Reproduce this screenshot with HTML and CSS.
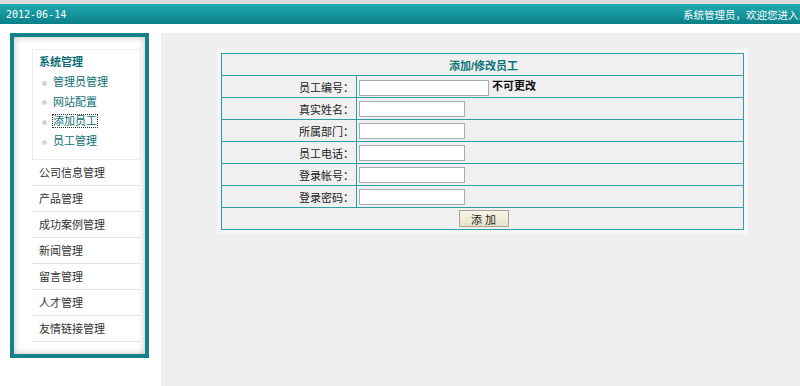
FILE: index.html
```html
<!DOCTYPE html>
<html lang="zh">
<head>
  <meta charset="utf-8">
  <title>后台管理</title>
  <link rel="stylesheet" href="styles.css">
</head>
<body>

  <div class="top">
    <span class="date">2012-06-14</span>
    <span class="welcome">系统管理员，欢迎您进入系统后台管理</span>
  </div>

  <div class="wrap">
    <div class="side">
      <div class="side-inner">
        <div class="sub">
          <h4>系统管理</h4>
          <ul>
            <li><a href="#">管理员管理</a></li>
            <li><a href="#">网站配置</a></li>
            <li><a href="#" class="focus">添加员工</a></li>
            <li><a href="#">员工管理</a></li>
          </ul>
        </div>
        <ul class="menu">
          <li>公司信息管理</li>
          <li>产品管理</li>
          <li>成功案例管理</li>
          <li>新闻管理</li>
          <li>留言管理</li>
          <li>人才管理</li>
          <li>友情链接管理</li>
        </ul>
      </div>
    </div>

    <div class="main">
      <table class="form">
        <tr><th colspan="2">添加/修改员工</th></tr>
        <tr><td class="lbl">员工编号：</td><td><input class="wide" type="text"> <b>不可更改</b></td></tr>
        <tr><td class="lbl">真实姓名：</td><td><input type="text"></td></tr>
        <tr><td class="lbl">所属部门：</td><td><input type="text"></td></tr>
        <tr><td class="lbl">员工电话：</td><td><input type="text"></td></tr>
        <tr><td class="lbl">登录帐号：</td><td><input type="text"></td></tr>
        <tr><td class="lbl">登录密码：</td><td><input type="text"></td></tr>
        <tr><td colspan="2" class="btns"><button>添 加</button></td></tr>
      </table>
    </div>
  </div>

</body>
</html>
```

FILE: styles.css
```css
body {
  margin: 0;
  background: #fff;
  font-family: "Liberation Sans", "Noto Sans CJK SC", sans-serif;
  font-size: 11px;
  color: #222;
}
ul {
  list-style: none;
  margin: 0;
  padding: 0;
}
.top {
  border-top: 4px solid #dcdcdc;
  height: 20px;
  background: linear-gradient(#22abb3, #0b8088);
  color: #fff;
  display: grid;
  grid-template-columns: 683px 117px;
  align-items: center;
  white-space: nowrap;
  overflow: hidden;
}
.date {
  padding-left: 6px;
  font-family: "DejaVu Sans Mono", monospace;
  font-size: 10px;
}
.welcome {
  overflow: hidden;
  font-size: 10.5px;
}
.wrap {
  display: flex;
  padding-top: 9px;
}
.side {
  margin-left: 10px;
  width: 139px;
  height: 325px;
  box-sizing: border-box;
  border: 4px solid #138388;
  background: #fff;
  box-shadow: inset 0 0 7px rgba(0, 0, 0, 0.25);
}
.side-inner {
  margin: 12px 4px 0 18px;
}
.sub {
  border: 1px solid #ececec;
  padding: 5px 0 7px 6px;
}
.sub h4 {
  margin: 0 0 4px;
  font-size: 11px;
  color: #0b6d72;
  line-height: 14px;
}
.sub li {
  line-height: 19.7px;
  padding-left: 3px;
}
.sub li::before {
  content: "";
  display: inline-block;
  width: 5px;
  height: 5px;
  border-radius: 50%;
  background: #d6d6d6;
  margin-right: 6px;
  vertical-align: middle;
}
.sub a {
  color: #0e6f75;
  text-decoration: none;
}
.sub a.focus {
  outline: 1px dotted #333;
}
.menu li {
  height: 25px;
  line-height: 26px;
  padding-left: 7px;
  border-bottom: 1px solid #e3e3e3;
  color: #333;
}
.main {
  margin-left: 12px;
  flex: 1;
  height: 353px;
  box-sizing: border-box;
  background: #efefef;
  padding: 20px 0 0 60px;
}
.form {
  width: 523px;
  border-collapse: collapse;
  border: 1px solid #1f9299;
  background: #f0f0f0;
  box-shadow: 0 0 0 4px #f6f6f6;
}
.form th, .form td {
  border: 1px solid #2f9fa6;
  height: 21px;
  padding: 0 0 0 2px;
}
.form th {
  color: #0b7479;
  font-size: 11px;
}
.form .lbl {
  width: 130px;
  text-align: right;
  padding-right: 2px;
}
.form input {
  width: 102px;
  height: 14px;
  border: 1px solid #a5acb2;
  background: #fff;
  vertical-align: middle;
  margin: 0;
  padding: 0 1px;
}
.form input.wide {
  width: 126px;
}
.form b {
  color: #111;
}
.btns {
  text-align: center;
}
.btns button {
  width: 50px;
  height: 17px;
  padding: 0;
  font-family: inherit;
  font-size: 11px;
  color: #222;
  border: 1px solid #a8a48f;
  background: linear-gradient(#f8f6ea, #e6e1c8);
  vertical-align: middle;
}
```
